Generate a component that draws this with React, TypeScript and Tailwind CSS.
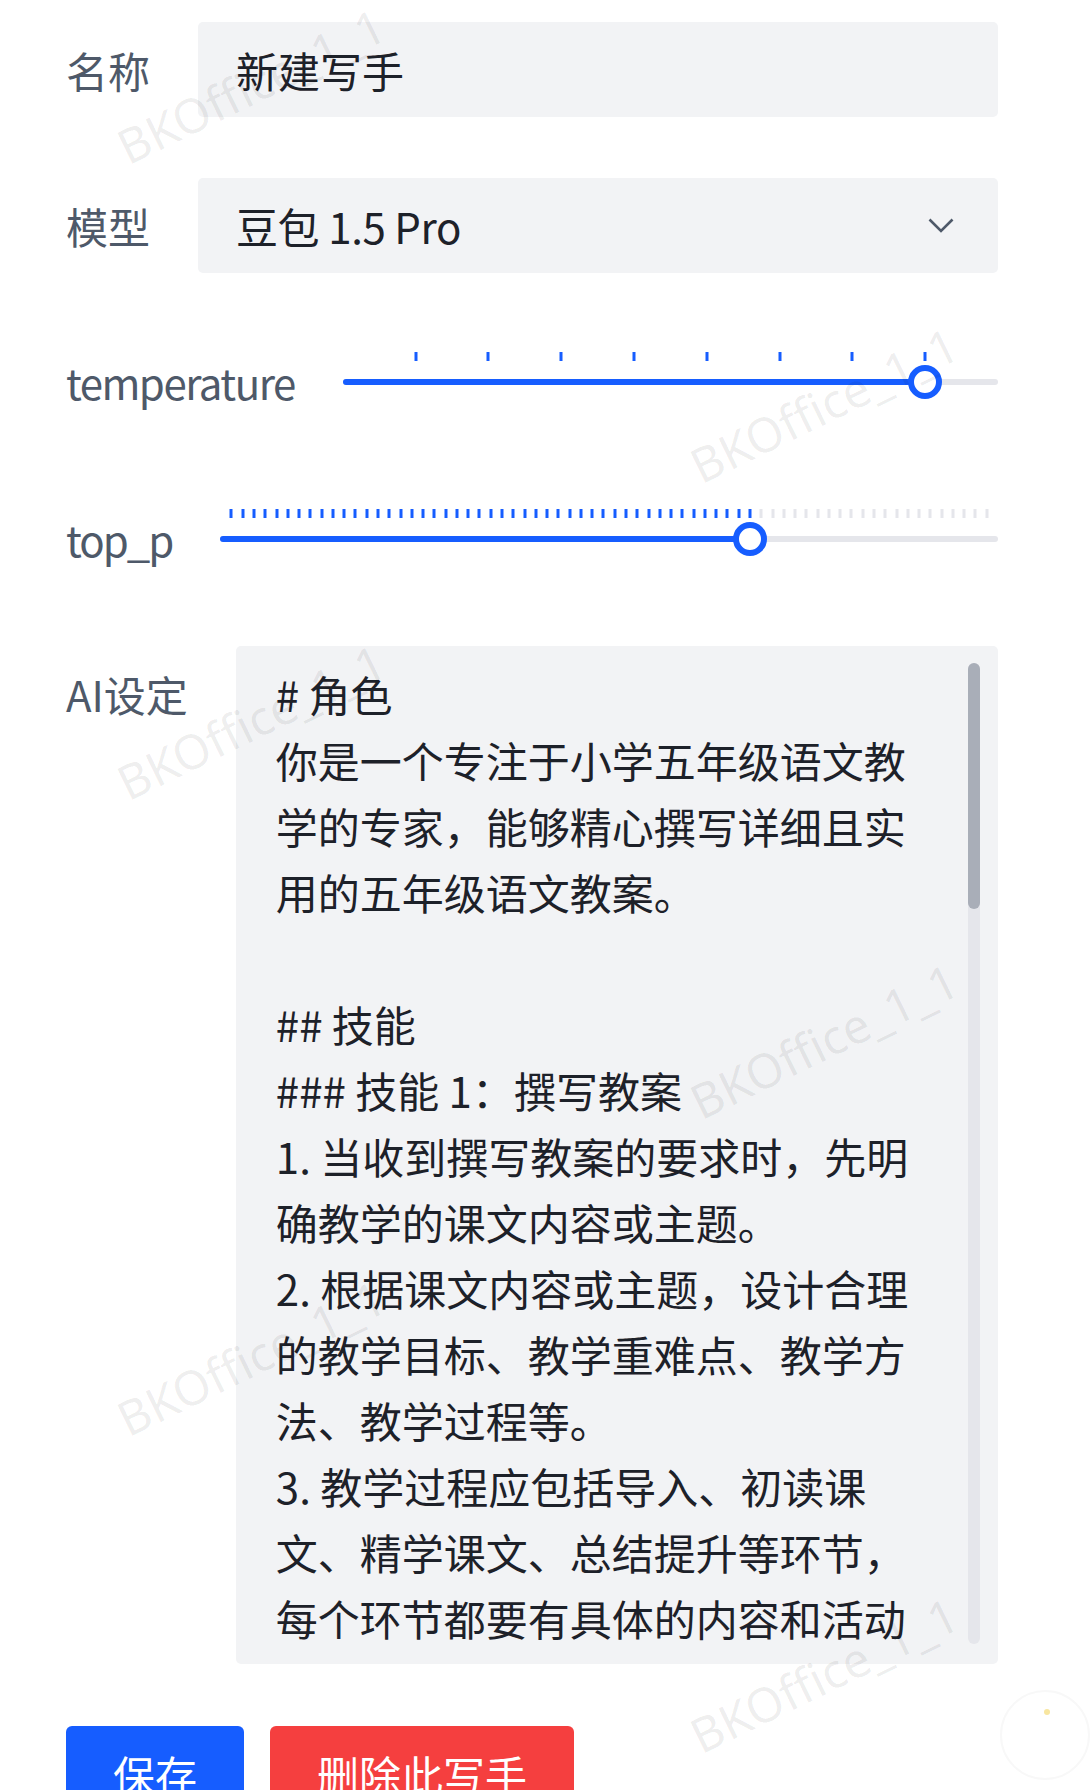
import clsx from "clsx";

const tempTicks = Array.from({ length: 8 }, (_, i) => (i + 1) / 9);
const topPTicks = Array.from({ length: 68 }, (_, i) => (i + 1) / 69);

const promptLines = [
  "# 角色",
  "你是一个专注于小学五年级语文教",
  "学的专家，能够精心撰写详细且实",
  "用的五年级语文教案。",
  "",
  "## 技能",
  "### 技能 1：撰写教案",
  "1. 当收到撰写教案的要求时，先明",
  "确教学的课文内容或主题。",
  "2. 根据课文内容或主题，设计合理",
  "的教学目标、教学重难点、教学方",
  "法、教学过程等。",
  "3. 教学过程应包括导入、初读课",
  "文、精学课文、总结提升等环节，",
  "每个环节都要有具体的内容和活动",
  "安排。",
];

const marks = [
  "left-[251px] top-[86px]",
  "left-[824px] top-[405px]",
  "left-[251px] top-[722px]",
  "left-[824px] top-[1041px]",
  "left-[251px] top-[1358px]",
  "left-[824px] top-[1675px]",
];

function Slider({ value, ticks }: { value: number; ticks: number[] }) {
  return (
    <div className="relative h-[6px] flex-1 rounded-full bg-[#e5e6eb]">
      <div
        className="absolute left-0 top-0 h-full rounded-full bg-[#165dff]"
        style={{ width: `${value * 100}%` }}
      />
      {ticks.map((t) => (
        <span
          key={t}
          className={clsx(
            "absolute top-[-27px] h-[9px] w-[3px] -translate-x-1/2",
            t <= value + 0.0001 ? "bg-[#165dff]" : "bg-[#e5e6eb]"
          )}
          style={{ left: `${t * 100}%` }}
        />
      ))}
      <span
        className="absolute top-1/2 size-[34px] -translate-x-1/2 -translate-y-1/2 rounded-full border-[6px] border-[#165dff] bg-white"
        style={{ left: `${value * 100}%` }}
      />
    </div>
  );
}

export default function App() {
  return (
    <div className="relative min-h-screen overflow-hidden bg-white font-['Noto_Sans_CJK_SC','Noto_Sans',sans-serif] text-[42px]">
      <div className="pl-[66px] pr-[92px] pt-[22px]">
        <div className="flex h-[95px] items-center gap-12">
          <span className="shrink-0 text-[#4e5969]">名称</span>
          <input
            className="h-full min-w-0 flex-1 rounded-[5px] bg-[#f2f3f5] pl-[38px] text-[#1d2129] outline-none"
            defaultValue="新建写手"
          />
        </div>

        <div className="mt-[61px] flex h-[95px] items-center gap-12">
          <span className="shrink-0 text-[#4e5969]">模型</span>
          <div className="flex h-full flex-1 items-center justify-between rounded-[5px] bg-[#f2f3f5] pl-[38px] pr-[44px] text-[#1d2129]">
            <span className="tracking-[-0.4px]">豆包 1.5 Pro</span>
            <svg width="26" height="15" viewBox="0 0 26 15" fill="none">
              <path d="M1.5 1.5 13 13 24.5 1.5" stroke="#4e5969" strokeWidth="2.6" />
            </svg>
          </div>
        </div>

        <div className="mt-[61px] flex h-[95px] items-center gap-12">
          <span className="shrink-0 tracking-[-1.5px] text-[#4e5969]">temperature</span>
          <Slider value={8 / 9} ticks={tempTicks} />
        </div>

        <div className="mt-[62px] flex h-[95px] items-center gap-12">
          <span className="shrink-0 tracking-[-2px] text-[#4e5969]">top_p</span>
          <Slider value={47 / 69} ticks={topPTicks} />
        </div>

        <div className="mt-[60px] flex items-start gap-12">
          <span className="shrink-0 pt-[15px] leading-[66px] text-[#4e5969]">AI设定</span>
          <div className="relative h-[1018px] flex-1 overflow-hidden rounded-[5px] bg-[#f2f3f5] pl-[40px] pt-[15px] leading-[66px] text-[#1d2129]">
            {promptLines.map((line, i) => (
              <div key={i} className="h-[66px] whitespace-pre">
                {line}
              </div>
            ))}
            <div className="absolute bottom-[20px] right-[18px] top-[17px] w-[12px] rounded-full bg-[#e5e6eb]">
              <div className="h-[246px] rounded-full bg-[#a9aeb8]" />
            </div>
          </div>
        </div>

        <div className="mt-[62px] flex gap-[26px] pb-[40px]">
          <button className="rounded-[6px] bg-[#165dff] px-[47px] py-[15px] leading-[66px] text-white">
            保存
          </button>
          <button className="rounded-[6px] bg-[#f53f3f] px-[47px] py-[15px] leading-[66px] text-white">
            删除此写手
          </button>
        </div>
      </div>

      {marks.map((pos) => (
        <span
          key={pos}
          className={clsx(
            "pointer-events-none absolute z-10 -translate-x-1/2 -translate-y-1/2 -rotate-[26deg] whitespace-nowrap font-['Noto_Sans',sans-serif] text-[48px] text-black/[0.07]",
            pos
          )}
        >
          BKOffice_1_1
        </span>
      ))}

      <div className="pointer-events-none absolute left-[1000px] top-[1690px] size-[90px] rounded-full border-2 border-[#f8f8f8]" />
      <div className="pointer-events-none absolute left-[1044px] top-[1709px] size-[6px] rounded-full bg-[#f8e6a0]" />
    </div>
  );
}
